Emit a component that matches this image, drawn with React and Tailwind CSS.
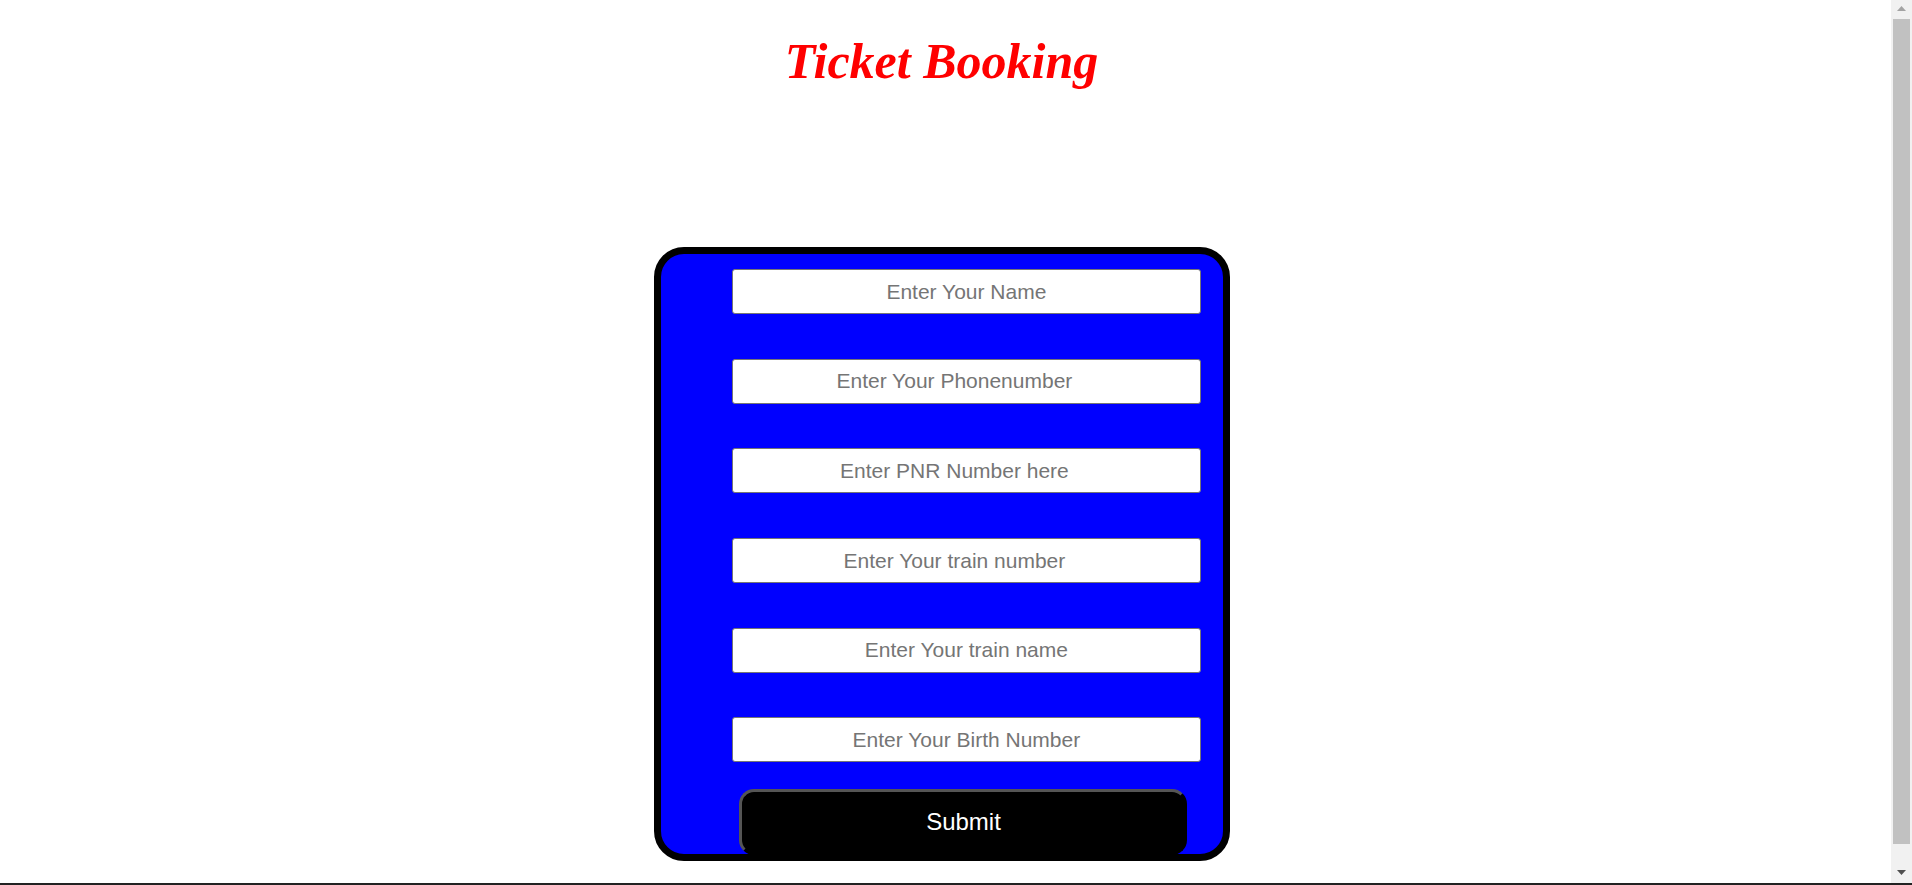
const fields = [
  { label: 'Enter Your Name', type: 'text' },
  { label: 'Enter Your Phonenumber', type: 'number' },
  { label: 'Enter PNR Number here', type: 'number' },
  { label: 'Enter Your train number', type: 'number' },
  { label: 'Enter Your train name', type: 'text' },
  { label: 'Enter Your Birth Number', type: 'text' }
]

const App = () => {
  return (
    <div className="w-[1883px] pb-[43px] bg-white">
      <h1
        className="mt-[33px] text-center text-[50px] leading-[57px] font-bold italic text-[#ff0000]"
        style={{ fontFamily: '"Liberation Serif", "Times New Roman", serif' }}
      >
        Ticket Booking
      </h1>

      {/* Booking form */}
      <form
        className="mx-auto mt-[156.7px] w-[576px] h-[614px] overflow-hidden rounded-[30px] border-[7px] border-black bg-[#0000ff] pt-[15.6px] pl-[71.4px] pr-[21.6px]"
        style={{ fontFamily: '"Liberation Sans", Arial, sans-serif' }}
        onSubmit={(e) => e.preventDefault()}
      >
        <div className="flex flex-col gap-[44.6px]">
          {fields.map((f) => (
            <input
              key={f.label}
              type={f.type}
              placeholder={f.label}
              className={
                'h-[45px] w-full rounded-[3px] border border-[#767676] bg-white text-center text-[21px] text-black placeholder:text-[#757575] outline-none ' +
                (f.type === 'number' ? 'pr-[9px]' : '')
              }
            />
          ))}
        </div>
        <button
          type="submit"
          className="mt-[27px] ml-[7.6px] h-[66px] w-[448px] shrink-0 rounded-[15px] border-[3px] border-t-[#555555] border-l-[#555555] border-r-black border-b-black bg-black text-[24px] text-white"
        >
          Submit
        </button>
      </form>

      {/* window scrollbar */}
      <div className="fixed top-0 right-0 bottom-0 flex w-[21px] flex-col items-center bg-[#f1f1f1]">
        <div className="flex h-[17px] w-full items-center justify-center">
          <svg width="9" height="5" viewBox="0 0 9 5">
            <path d="M0 5 L4.5 0 L9 5 Z" fill="#a3a3a3" />
          </svg>
        </div>
        <div className="ml-[2px] mr-[2px] mt-[2px] h-[825px] w-[17px] bg-[#c1c1c1]"></div>
        <div className="flex-1"></div>
        <div className="mb-[4px] flex h-[17px] w-full items-center justify-center">
          <svg width="9" height="5" viewBox="0 0 9 5">
            <path d="M0 0 L9 0 L4.5 5 Z" fill="#505050" />
          </svg>
        </div>
      </div>

      <div className="fixed bottom-0 left-0 right-0 h-[2px] bg-[#222222]"></div>
    </div>
  )
}

export default App
